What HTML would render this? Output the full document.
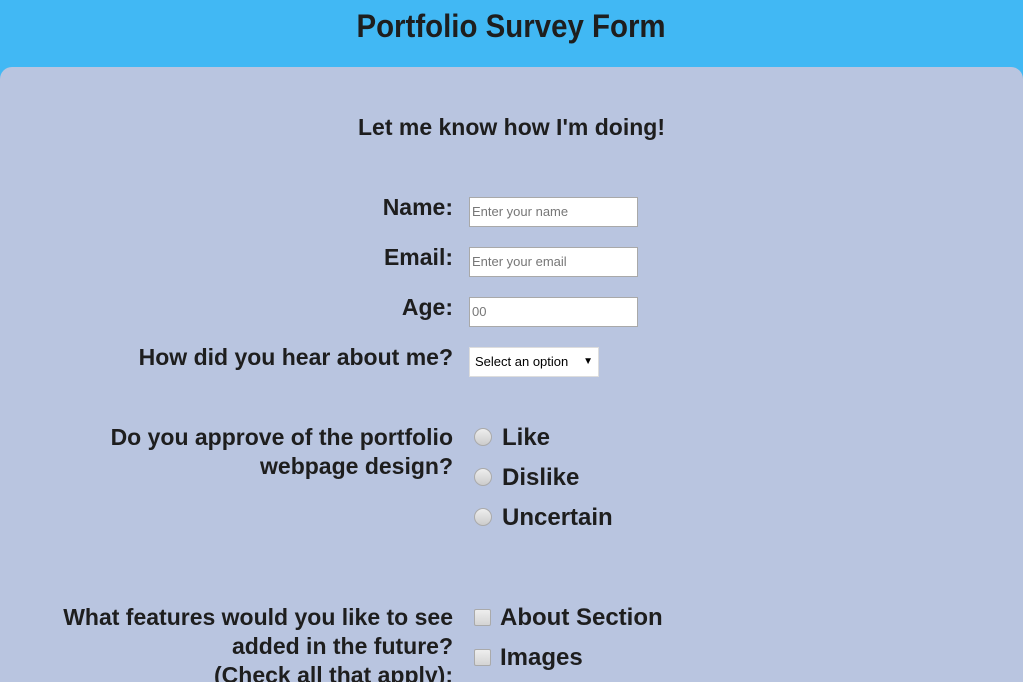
<!DOCTYPE html>
<html><head><style>
html,body{margin:0;width:1023px;height:682px;overflow:hidden}
body{background:#41b8f4;font-family:"Liberation Sans",sans-serif;position:relative;color:#1e1e1e}
.h{position:absolute;left:0;width:1023px;text-align:center;font-weight:bold}
.panel{position:absolute;left:0;top:67px;width:1023px;height:615px;background:#b9c5e0;border-radius:12px 12px 0 0}
.s{display:inline-block;transform:scaleX(1);font-weight:bold;white-space:nowrap;letter-spacing:0}
.lab{position:absolute;right:570px;text-align:right;font-size:23px;font-weight:bold;line-height:29px}
.lab .s{transform-origin:right center}
.in{position:absolute;left:469px;width:165px;height:28px;background:#fff;border:1px solid #a9a9a9;font-size:13px;color:#777;line-height:28px;padding-left:2px;box-sizing:content-box}
.opt{position:absolute;left:502px;font-size:24px;line-height:29px}
.opt .s{transform-origin:left center}
.rad{position:absolute;left:474px;width:18px;height:18px;border-radius:50%;background:linear-gradient(#eee,#ccc);border:1px solid #aaa;box-sizing:border-box}
.cb{position:absolute;left:474px;width:17px;height:17px;background:linear-gradient(#eee,#d4d4d4);border:1px solid #aaa;box-sizing:border-box;border-radius:2px}
</style></head><body>
<div class="h" style="top:6px;font-size:32px;line-height:40px"><span class="s" style="transform:scaleX(.92)">Portfolio Survey Form</span></div>
<div class="panel"></div>
<div class="h" style="top:112px;font-size:23px;line-height:30px"><span class="s">Let me know how I'm doing!</span></div>

<div class="lab" style="top:193px"><span class="s">Name:</span></div>
<div class="in" style="top:197px">Enter your name</div>
<div class="lab" style="top:243px"><span class="s">Email:</span></div>
<div class="in" style="top:247px">Enter your email</div>
<div class="lab" style="top:293px"><span class="s">Age:</span></div>
<div class="in" style="top:297px">00</div>
<div class="lab" style="top:343px"><span class="s">How did you hear about me?</span></div>
<div class="in" style="top:347px;width:123px;color:#000;border-color:#ddd;padding-left:5px">Select an option<span style="position:absolute;right:5px;font-size:10px">▼</span></div>

<div class="lab" style="top:423px"><span class="s">Do you approve of the portfolio</span><br><span class="s">webpage design?</span></div>
<div class="rad" style="top:428px"></div><div class="opt" style="top:423px"><span class="s">Like</span></div>
<div class="rad" style="top:468px"></div><div class="opt" style="top:463px"><span class="s">Dislike</span></div>
<div class="rad" style="top:508px"></div><div class="opt" style="top:503px"><span class="s">Uncertain</span></div>

<div class="lab" style="top:603px"><span class="s">What features would you like to see</span><br><span class="s">added in the future?</span><br><span class="s">(Check all that apply):</span></div>
<div class="cb" style="top:609px"></div><div class="opt" style="top:603px;left:500px"><span class="s">About Section</span></div>
<div class="cb" style="top:649px"></div><div class="opt" style="top:643px;left:500px"><span class="s">Images</span></div>
</body></html>
